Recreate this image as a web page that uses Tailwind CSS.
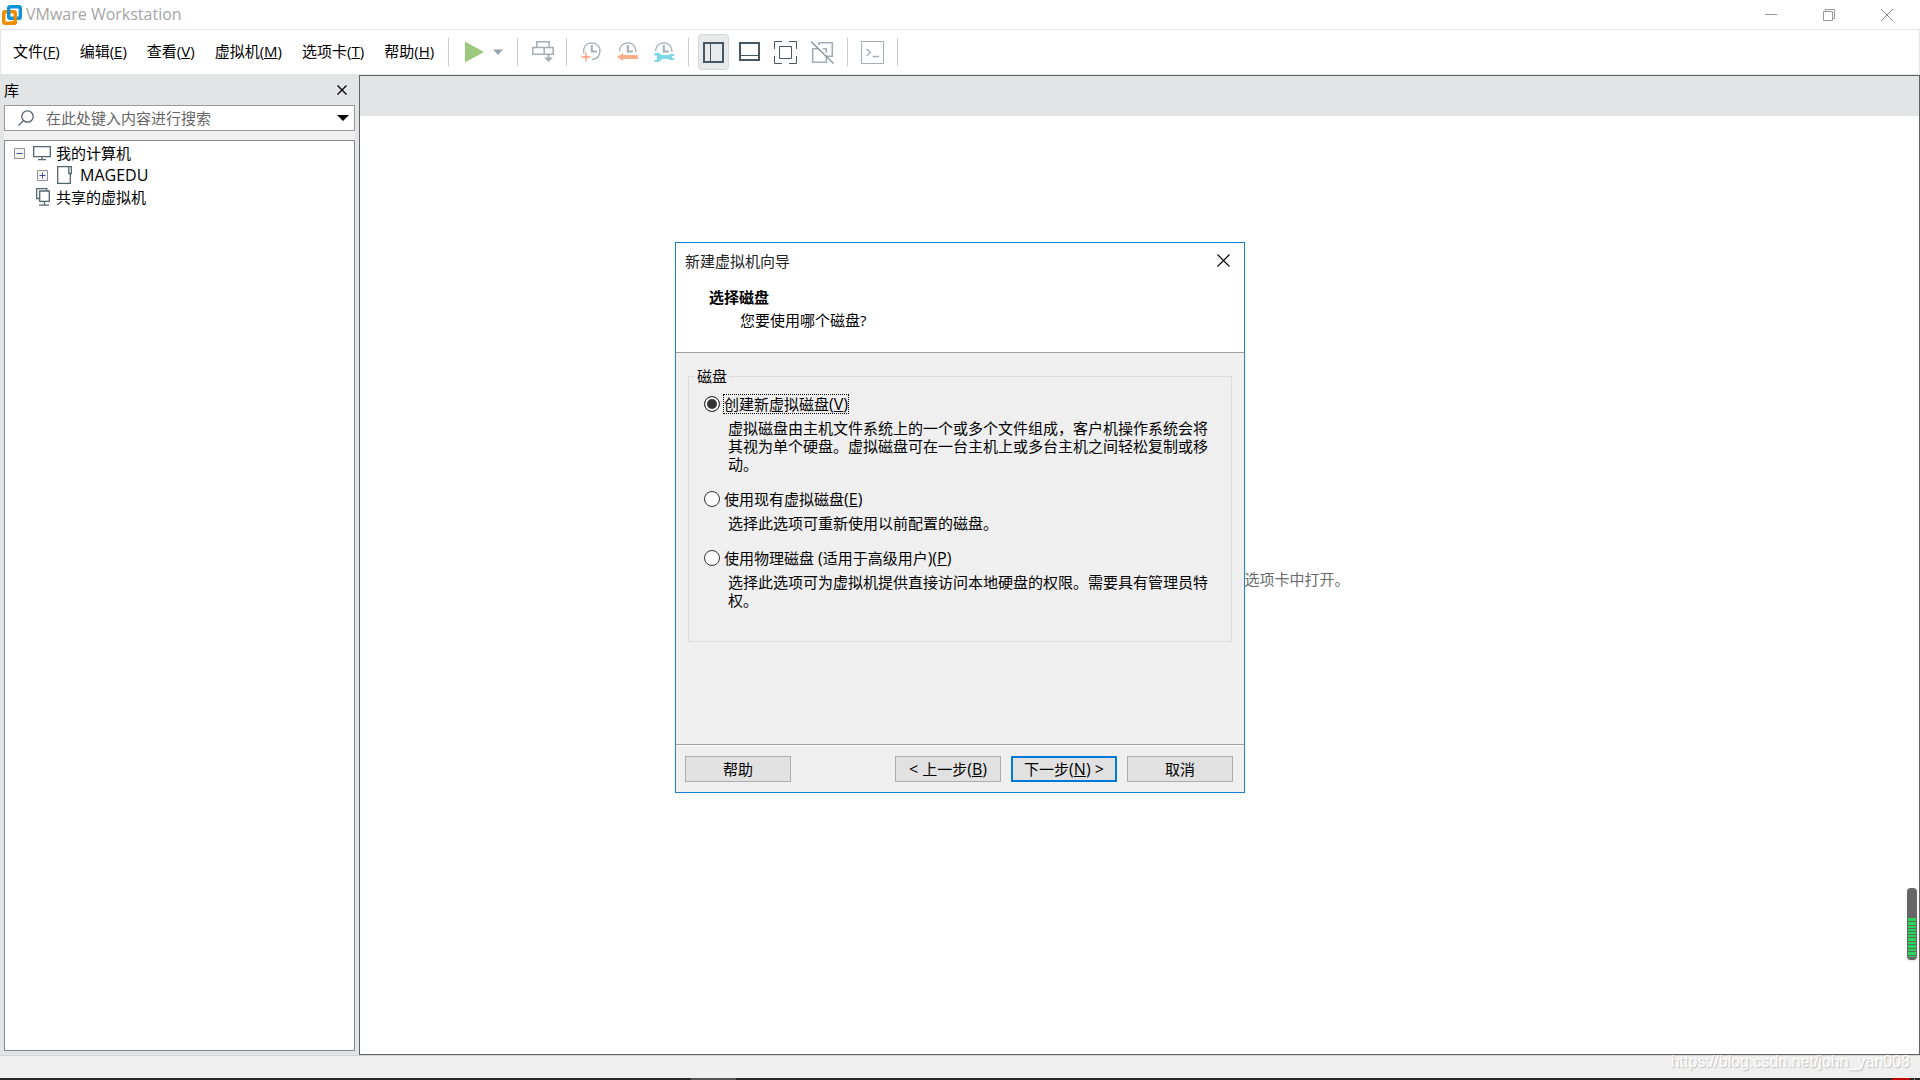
<!DOCTYPE html>
<html lang="zh-CN">
<head>
  <meta charset="UTF-8" />
  <meta name="viewport" content="width=device-width, initial-scale=1.0" />
  <title>VMware Workstation</title>
  <script src="https://cdn.jsdelivr.net/npm/@tailwindcss/browser@4"></script>
</head>
<body class="relative h-screen flex flex-col overflow-hidden bg-white text-black text-[15px] leading-5 font-['Open_Sans','Noto_Sans_CJK_SC',sans-serif]">

  <!-- Title bar -->
  <header class="h-[30px] shrink-0 flex items-center border-b border-[#e3e4e6] pl-0.5">
    <svg class="w-5 h-5 mr-1" viewBox="0 0 20 20" fill="none" stroke-width="3.400">
      <rect x="1.700" y="6.700" width="11.600" height="11.600" rx="1.500" stroke="#f38b00" />
      <rect x="6.700" y="1.700" width="11.600" height="11.600" rx="1.500" stroke="#0f95d7" />
      <path d="M13.300 10.500v6.300q0 1.500-1.500 1.500H8" stroke="#f38b00" />
    </svg>
    <h1 class="text-base leading-5 pb-0.5 text-[#a5a5a5]">VMware Workstation</h1>
    <div class="ml-auto flex pr-1">
      <button type="button" aria-label="最小化" class="w-[58px] h-7 flex items-center justify-center">
        <svg class="w-3 h-3" viewBox="0 0 12 12" stroke="#999"><path d="M0 5.500h12" /></svg>
      </button>
      <button type="button" aria-label="还原" class="w-[58px] h-7 flex items-center justify-center">
        <svg class="w-3 h-3" viewBox="0 0 12 12" fill="none" stroke="#999"><path d="M.5 2.500h9v9h-9zM2.500 2.500v-2h9v9h-2" /></svg>
      </button>
      <button type="button" aria-label="关闭" class="w-[58px] h-7 flex items-center justify-center">
        <svg class="w-3 h-3" viewBox="0 0 12 12" stroke="#888"><path d="M0 0l12 12M12 0L0 12" /></svg>
      </button>
    </div>
  </header>

  <!-- Menu and toolbar -->
  <div class="h-11 shrink-0 flex items-center border-x border-[#e3e4e6]">
    <nav class="flex gap-5 pl-3 pb-[3px]">
      <button type="button">文件(<u>F</u>)</button>
      <button type="button">编辑(<u>E</u>)</button>
      <button type="button">查看(<u>V</u>)</button>
      <button type="button">虚拟机(<u>M</u>)</button>
      <button type="button">选项卡(<u>T</u>)</button>
      <button type="button">帮助(<u>H</u>)</button>
    </nav>
    <div class="w-px h-7 bg-[#ccc] ml-3.5"></div>
    <button type="button" aria-label="启动" class="ml-4">
      <svg class="w-5 h-6" viewBox="0 0 20 24"><path d="M0 1.500L19 12 0 22.500z" fill="#9fc87f" /></svg>
    </button>
    <button type="button" aria-label="电源选项" class="ml-2">
      <svg class="w-2.5 h-6" viewBox="0 0 10 24"><path d="M0 9.500h10l-5 5.500z" fill="#9aa5ae" /></svg>
    </button>
    <div class="w-px h-7 bg-[#ccc] ml-3.5"></div>
    <button type="button" aria-label="发送 Ctrl+Alt+Del" class="ml-3.5">
      <svg class="w-[22px] h-6" viewBox="0 0 22 24" fill="none" stroke="#a2adb5" stroke-width="1.500">
        <path d="M4.800 7.500V1.800h12.400v5.700M.8 7.500h20.400v6.700H.8zM12.200 7.500v6.700" />
        <path d="M16.500 14v6" stroke-width="2" />
        <path d="M12 17.500h9l-4.500 4.500z" fill="#a2adb5" stroke="none" />
      </svg>
    </button>
    <div class="w-px h-7 bg-[#ccc] ml-3"></div>
    <button type="button" aria-label="拍摄快照" class="ml-3.5">
      <svg class="w-[22px] h-6" viewBox="0 0 22 24" fill="none" stroke="#a2adb5" stroke-width="1.300">
        <path d="M3 13.500C2 9 3.500 6 6 4.200 8.500 2.700 13 2.700 15.500 4.200 18.500 6.300 19.500 10 18.500 13.500 17.500 17.500 14.500 19.300 11 19.300" />
        <path d="M10.800 5v6.500h5" stroke-width="2" />
        <path d="M5 12.500v9M.5 17h9" stroke="#ff9c76" stroke-width="1.300" />
      </svg>
    </button>
    <button type="button" aria-label="恢复快照" class="ml-3.5">
      <svg class="w-[22px] h-6" viewBox="0 0 22 24" fill="none" stroke="#a2adb5" stroke-width="1.300">
        <path d="M2.500 11C3 7 4.500 4.900 6.500 4 9 2.800 13 2.800 15.500 4.200 18 6 19 8.500 19 12" />
        <path d="M10.800 5v6.500h5" stroke-width="2" />
        <path d="M0 17l6-4v2h15v4H6v2z" fill="#ffae88" stroke="none" />
      </svg>
    </button>
    <button type="button" aria-label="管理快照" class="ml-3.5">
      <svg class="w-[22px] h-6" viewBox="0 0 22 24" fill="none" stroke="#a2adb5" stroke-width="1.300">
        <path d="M2.500 11C3 7 4.500 4.900 6.500 4 9 2.800 13 2.800 15.500 4.200 18 6 19 8.500 19 12" />
        <path d="M10.800 5v6.500h5" stroke-width="2" />
        <path d="M1.500 13h4q2 0 3 2h7l1.500-1H21v2h-2v2h2v2h-4.500L15 19H8.500q-1 3-3.500 3H1.500v-2H4v-4.500H1.500z" fill="#7ed8ea" stroke="none" />
      </svg>
    </button>
    <div class="w-px h-7 bg-[#ccc] ml-[13px]"></div>
    <button type="button" aria-label="显示库" class="ml-[9px] w-[31px] h-9 flex items-center justify-center rounded border border-[#d5d6d8] bg-[#e9eaec]">
      <svg class="w-[21px] h-[21px]" viewBox="0 0 21 21" fill="none" stroke="#455864"><path d="M1 1h19v19H1z" stroke-width="2" /><path d="M7.500 1v19" /></svg>
    </button>
    <button type="button" aria-label="显示缩略图" class="ml-2.5">
      <svg class="w-[21px] h-[21px]" viewBox="0 0 21 21" fill="none" stroke="#455864"><path d="M1 1h19v17H1z" stroke-width="2" /><path d="M1 13.500h19" /></svg>
    </button>
    <button type="button" aria-label="全屏" class="ml-3.5">
      <svg class="w-[23px] h-[23px]" viewBox="0 0 23 23" fill="none" stroke="#455864"><path d="M.5 8V.5H8M15 .5h7.500V8M22.500 15v7.500H15M8 22.500H.5V15" /><path d="M5.500 5.500h12v12h-12z" /></svg>
    </button>
    <button type="button" aria-label="Unity 模式" class="ml-3.5">
      <svg class="w-[23px] h-[23px]" viewBox="0 0 23 23" fill="none" stroke="#a2adb5">
        <path d="M8 4V1.700h13.300v13.600H15M8 7.700H1.700v13.600h13.600V16M12 7.700h3.300V12" stroke-width="1.600" />
        <path d="M0 .5l22.500 22" stroke="#87939d" stroke-width="1.300" />
      </svg>
    </button>
    <div class="w-px h-7 bg-[#ccc] ml-[13px]"></div>
    <button type="button" aria-label="控制台" class="ml-[13px]">
      <svg class="w-[23px] h-[23px]" viewBox="0 0 23 23" fill="none" stroke="#a2adb5"><path d="M.5 .5h22v22H.5z" /><path d="M5.500 8l4 3.500-4 3.500M11.500 15.500H18" stroke-width="1.300" /></svg>
    </button>
    <div class="w-px h-7 bg-[#ccc] ml-[13px]"></div>
  </div>

  <div class="flex-1 min-h-0 flex bg-[#e3e4e6] pt-px">
    <!-- Library -->
    <aside class="w-[359px] shrink-0 flex flex-col pl-1 pr-1 pb-1">
      <div class="h-[30px] flex items-center justify-between pr-2 pb-px">
        <h2>库</h2>
        <button type="button" aria-label="关闭库">
          <svg class="w-2.5 h-2.5" viewBox="0 0 10 10" stroke="#000" stroke-width="1.300"><path d="M.5 .5l9 9M9.500 .5l-9 9" /></svg>
        </button>
      </div>
      <div class="bg-[#efefef] pb-[9px]">
        <div class="h-[26px] flex items-center bg-white border border-[#999] pl-[13px] pr-[5px]">
          <svg class="w-4 h-4 mr-3" viewBox="0 0 16 16" fill="none" stroke="#536471" stroke-width="1.300"><circle cx="9.500" cy="6.500" r="5.700" /><path d="M5.500 10.500L.5 15.500" /></svg>
          <input type="text" aria-label="搜索" placeholder="在此处键入内容进行搜索" class="flex-1 min-w-0 outline-none placeholder:text-[#666]" />
          <button type="button" aria-label="搜索选项">
            <svg class="w-3 h-1.5" viewBox="0 0 12 6"><path d="M0 0h12L6 6z" /></svg>
          </button>
        </div>
      </div>
      <ul class="flex-1 bg-white border border-[#828790] pt-px">
        <li class="h-[22px] flex items-center pl-[9px]">
          <button type="button" aria-label="折叠" class="mr-2">
            <svg class="w-[11px] h-[11px]" viewBox="0 0 11 11" fill="#f4f4f4" stroke="#919191"><path d="M.5 .5h10v10H.5z" /><path d="M2.500 5.500h6" stroke="#3c509c" /></svg>
          </button>
          <svg class="w-[18px] h-4 mr-[5px]" viewBox="0 0 18 16" fill="none" stroke="#53646f" stroke-width="1.300"><path d="M.7 1.700h16.600v10H.7zM9 12v2.500M5 14.700h8" /></svg>
          我的计算机
        </li>
        <li class="h-[22px] flex items-center pl-8">
          <button type="button" aria-label="展开" class="mr-[9px]">
            <svg class="w-[11px] h-[11px]" viewBox="0 0 11 11" fill="#f4f4f4" stroke="#919191"><path d="M.5 .5h10v10H.5z" /><path d="M2.500 5.500h6M5.500 2.500v6" stroke="#3c509c" /></svg>
          </button>
          <svg class="w-[15px] h-[18px] mr-2" viewBox="0 0 15 18" fill="none" stroke="#53646f" stroke-width="1.300"><path d="M13.300 7.500v9.800H.7V.7h13.600v6.800h-2.500V.7" /></svg>
          <span class="text-base leading-5">MAGEDU</span>
        </li>
        <li class="h-[22px] flex items-center pl-[31px]">
          <svg class="w-3.5 h-[18px] mr-1.5" viewBox="0 0 14 18" fill="none" stroke="#53646f" stroke-width="1.300"><path d="M3.700 3h9.600v10.300H3.700zM3.500 10.500H.7V.7h10V3M8.500 13.500V17M3 17.200h10" /></svg>
          共享的虚拟机
        </li>
      </ul>
    </aside>

    <!-- Workspace -->
    <main class="flex-1 flex flex-col bg-white border border-[#626262]">
      <div class="h-10 bg-[#e3e4e6]"></div>
      <div class="flex-1 flex items-center justify-center pl-[315px] pb-3">
        <p class="text-[#6b6b6b]">选项卡中打开。</p>
      </div>
    </main>
  </div>

  <footer class="h-[23px] shrink-0 flex items-start justify-end bg-[#efefef] border-t border-[#d3d4d6] pr-2.5">
    <p class="-mt-0.5 text-base leading-4 text-white [text-shadow:1px_1px_1px_#bbb] font-['Liberation_Sans',sans-serif]">https://blog.csdn.net/john_yan008</p>
  </footer>
  <div class="h-0.5 shrink-0 flex bg-[#272727]">
    <div class="w-[45px] bg-[#555] ml-[36%]"></div>
    <div class="w-[18px] bg-[#c00000] ml-auto mr-1"></div>
    <div class="w-px bg-[#888] mr-[5px]"></div>
  </div>

  <!-- Level gauge on the right edge -->
  <div class="absolute right-[3px] top-[888px] w-2.5 h-[72px] rounded bg-[#666] pt-[30px] px-px shadow">
    <svg class="w-2 h-10" viewBox="0 0 8 40" preserveAspectRatio="none">
      <rect width="8" height="39" fill="#2bd45e" />
      <path d="M0 3.500h8M0 7.500h8M0 10.500h8M0 13.500h8M0 16.500h8M0 19.500h8M0 23.500h8M0 26.500h8M0 30.500h8M0 33.500h8M0 37.500h8" stroke="#55705a" />
    </svg>
  </div>

  <!-- New virtual machine wizard -->
  <div class="absolute inset-x-0 top-[242px] flex justify-center">
    <form role="dialog" aria-labelledby="wizardTitle" class="w-[570px] bg-[#efefef] border border-[#1883d7]">
      <div class="bg-white h-[109px]">
        <div class="flex items-center justify-between pl-[9px] pr-3.5 h-9 pb-px">
          <h2 id="wizardTitle" class="text-[#222]">新建虚拟机向导</h2>
          <button type="button" aria-label="关闭">
            <svg class="w-[13px] h-[13px]" viewBox="0 0 13 13" stroke="#000" stroke-width="1.100"><path d="M.5 .5l12 12M12.500 .5l-12 12" /></svg>
          </button>
        </div>
        <h3 class="font-bold pl-[33px] pt-2">选择磁盘</h3>
        <p class="pl-16 pt-[3px]">您要使用哪个磁盘?</p>
      </div>

      <div class="border-y border-[#a0a0a0] px-3 pt-3.5">
        <fieldset class="relative border border-[#dcdcdc] mt-[9px] mb-[102px] h-[266px] px-[15px] pt-[17px]">
          <legend class="absolute left-1.5 -top-[11px] px-0.5 bg-[#efefef]">磁盘</legend>

          <div class="flex items-center gap-[3px] h-5">
            <input type="radio" name="disk" id="diskNew" checked class="appearance-none w-4 h-4 rounded-full border border-[#333] bg-white checked:bg-[#333] checked:border-[#333] checked:shadow-[inset_0_0_0_2px_white]" />
            <label for="diskNew" class="leading-[18px] border border-dotted border-black">创建新虚拟磁盘<span class="text-base leading-[18px]">(<u>V</u>)</span></label>
          </div>
          <p class="pl-6 pr-1.5 pt-[5px] leading-[18px]">虚拟磁盘由主机文件系统上的一个或多个文件组成，客户机操作系统会将其视为单个硬盘。虚拟磁盘可在一台主机上或多台主机之间轻松复制或移动。</p>

          <div class="flex items-center gap-1 h-5 mt-4">
            <input type="radio" name="disk" id="diskExisting" class="appearance-none w-4 h-4 rounded-full border border-[#333] bg-white checked:bg-[#333] checked:border-[#333] checked:shadow-[inset_0_0_0_2px_white]" />
            <label for="diskExisting">使用现有虚拟磁盘<span class="text-base leading-5">(<u>E</u>)</span></label>
          </div>
          <p class="pl-6 pr-1.5 pt-[5px] leading-[18px]">选择此选项可重新使用以前配置的磁盘。</p>

          <div class="flex items-center gap-1 h-5 mt-4">
            <input type="radio" name="disk" id="diskPhysical" class="appearance-none w-4 h-4 rounded-full border border-[#333] bg-white checked:bg-[#333] checked:border-[#333] checked:shadow-[inset_0_0_0_2px_white]" />
            <label for="diskPhysical">使用物理磁盘 <span class="text-base leading-5">(</span>适用于高级用户<span class="text-base leading-5">)(<u>P</u>)</span></label>
          </div>
          <p class="pl-6 pr-1.5 pt-[5px] leading-[18px]">选择此选项可为虚拟机提供直接访问本地硬盘的权限。需要具有管理员特权。</p>
        </fieldset>
      </div>

      <div class="border-t border-white flex gap-2.5 pl-[9px] pr-[11px] py-2.5">
        <button type="button" class="w-[106px] h-[26px] mr-auto bg-[#e1e1e1] border border-[#adadad]">帮助</button>
        <button type="button" class="w-[106px] h-[26px] bg-[#e1e1e1] border border-[#adadad]"><span class="text-base leading-5">&lt; </span>上一步<span class="text-base leading-5">(<u>B</u>)</span></button>
        <button type="submit" class="w-[106px] h-[26px] bg-[#e1e1e1] border-2 border-[#0078d7]">下一步<span class="text-base leading-5">(<u>N</u>) &gt;</span></button>
        <button type="button" class="w-[106px] h-[26px] bg-[#e1e1e1] border border-[#adadad]">取消</button>
      </div>
    </form>
  </div>

</body>
</html>
